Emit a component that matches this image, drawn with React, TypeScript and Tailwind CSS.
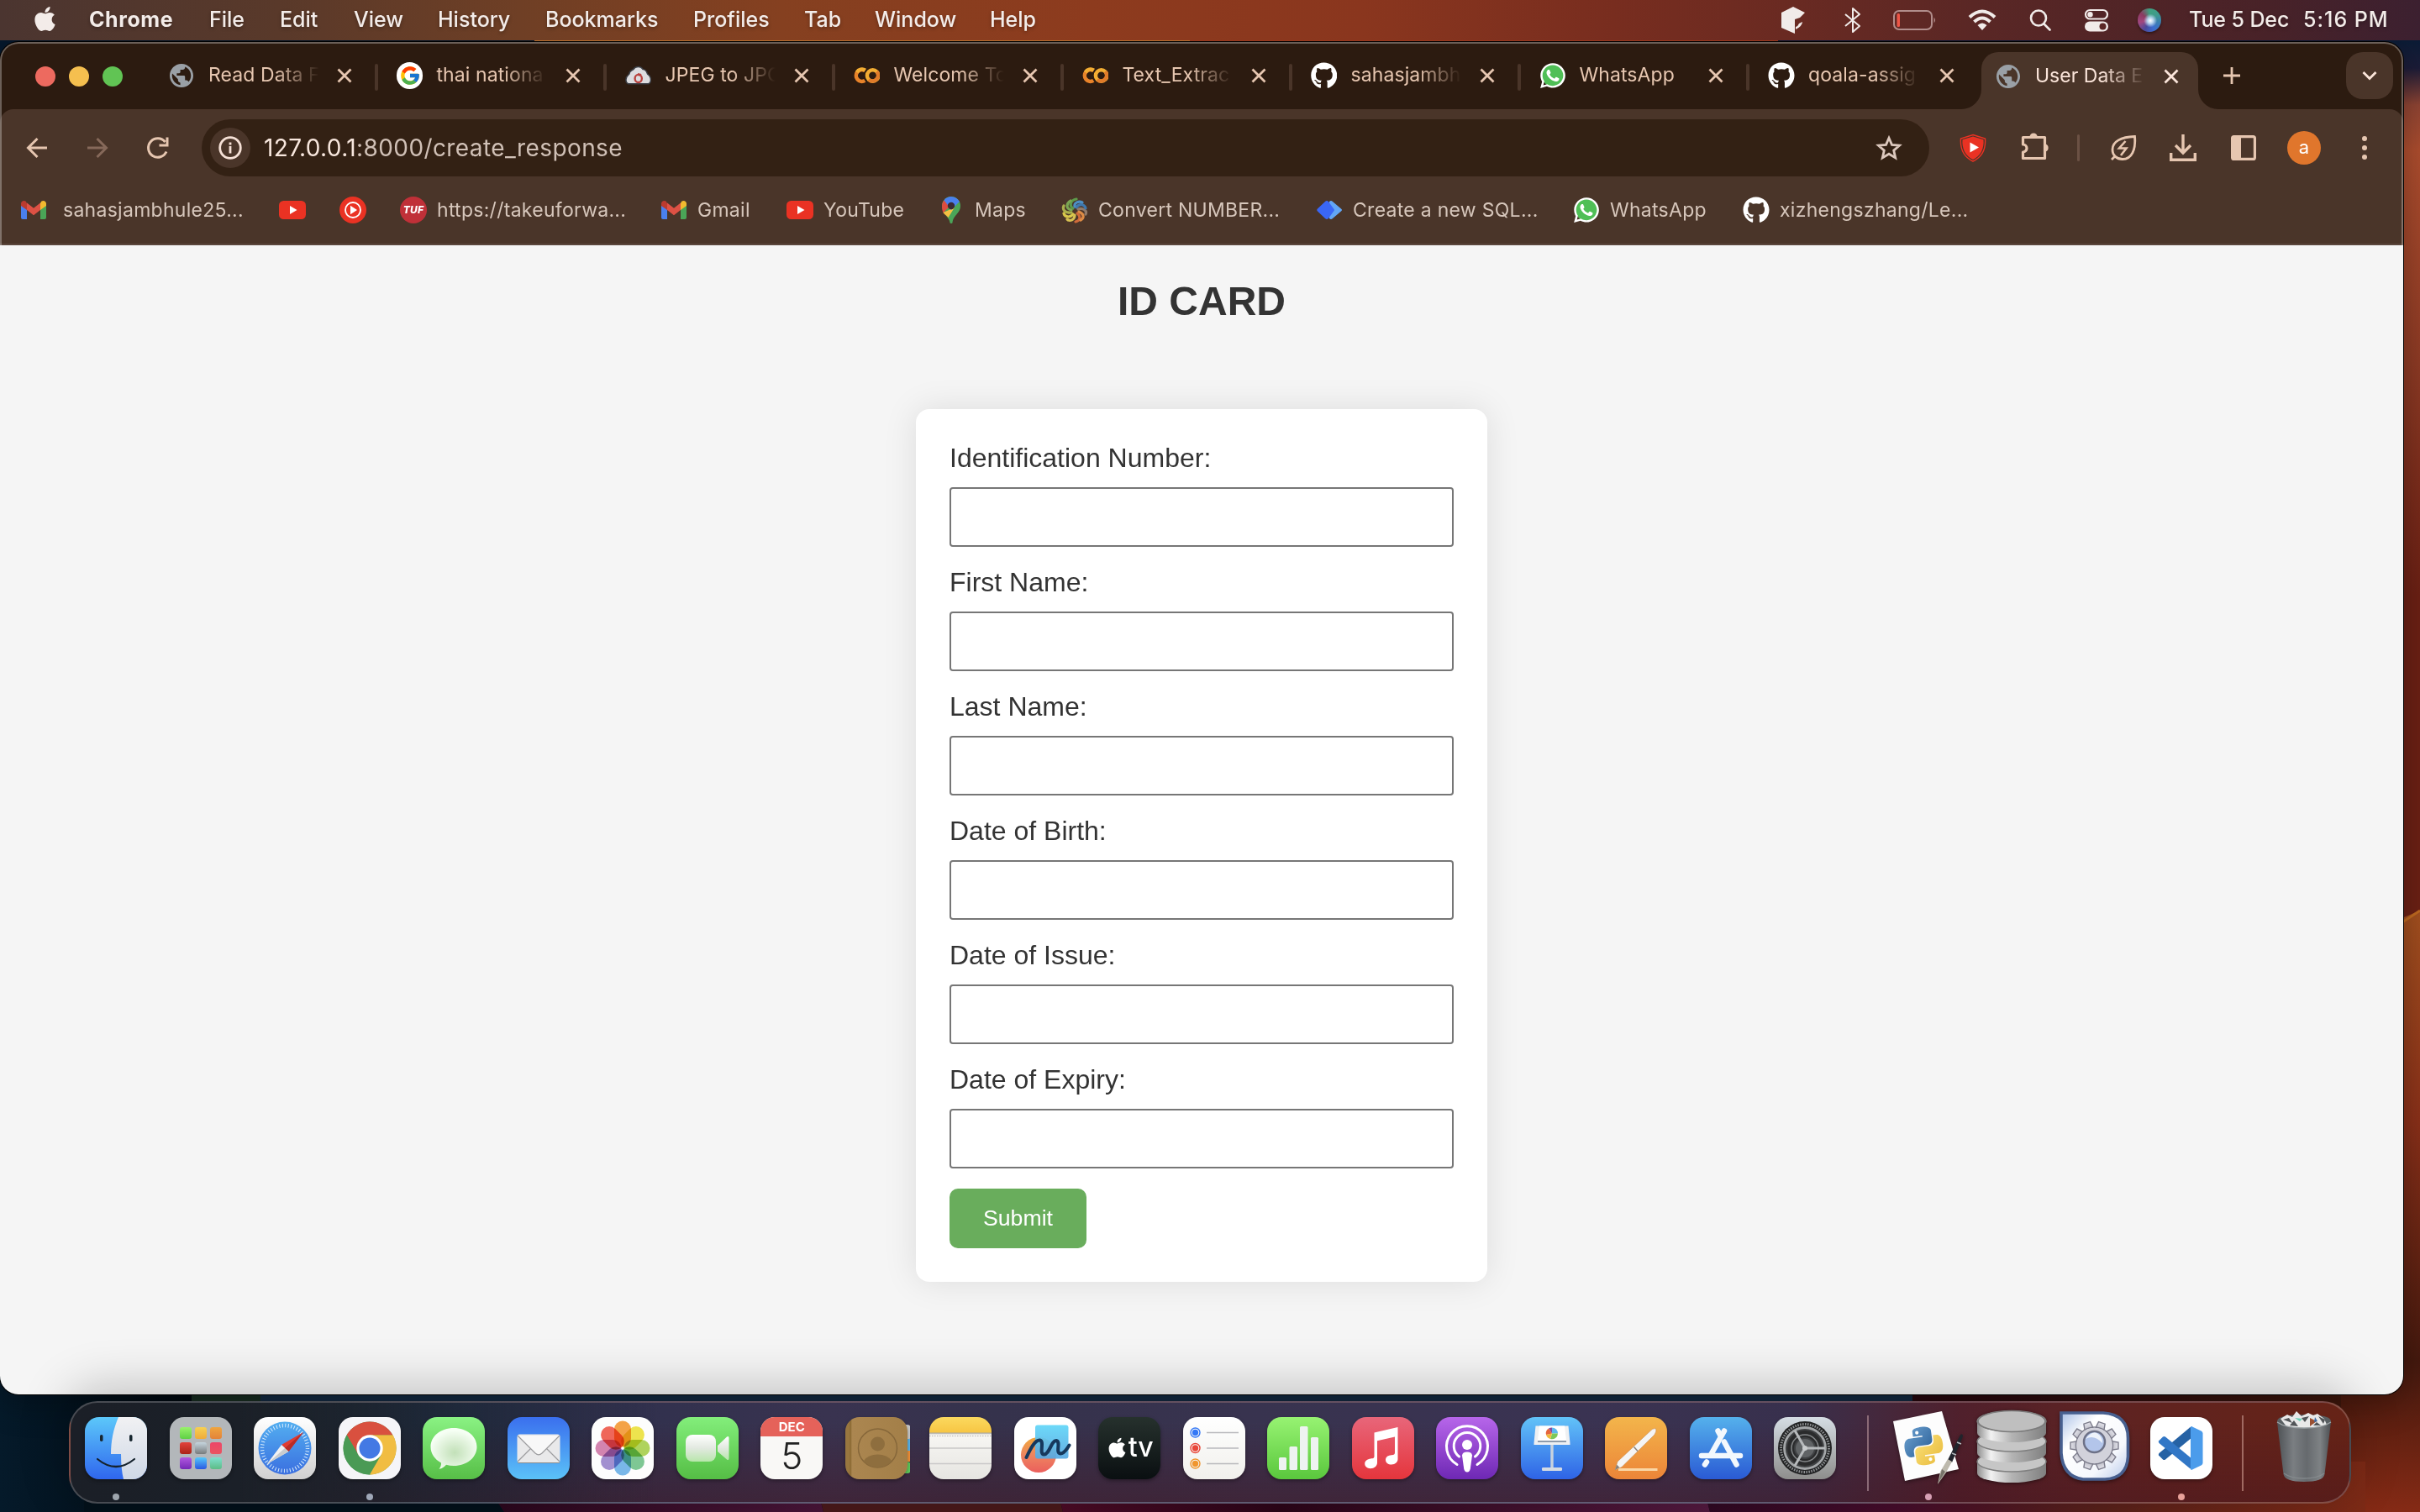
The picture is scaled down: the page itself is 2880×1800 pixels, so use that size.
import React from "react";
import { FaApple, FaGithub, FaWhatsapp } from "react-icons/fa6";
import { FcGoogle } from "react-icons/fc";

type Kids = { children?: React.ReactNode };

/* ---------- favicons ---------- */

const Globe = () => (
  <svg viewBox="0.6 0.6 22.8 22.8" className="size-8 shrink-0">
    <path d="M12 2C6.480 2 2 6.480 2 12s4.480 10 10 10 10-4.480 10-10S17.520 2 12 2zm-1 17.930c-3.950-.49-7-3.850-7-7.930 0-.62.08-1.210.21-1.790L9 15v1c0 1.100.9 2 2 2v1.930zm6.900-2.540c-.26-.81-1-1.390-1.900-1.390h-1v-3c0-.55-.45-1-1-1H8v-2h2c.55 0 1-.45 1-1V7h2c1.100 0 2-.9 2-2v-.41c2.930 1.190 5 4.060 5 7.410 0 2.080-.8 3.970-2.100 5.390z" fill="#9aa0a6" />
  </svg>
);

const GoogleIcon = () => (
  <div className="flex size-8 items-center justify-center rounded-full bg-white">
    <FcGoogle className="size-[26px]" />
  </div>
);

const CloudIcon = () => (
  <svg viewBox="0 0 32 32" className="size-8">
    <path d="M4 26a5 5 0 0 1-3-5c0-4 2-5 4-7 0-4 2.500-4 5-5.500 2-4 9-4.500 11.500 0C26 9 26 12 27 14c3 2 4 4 4 7a5 5 0 0 1-3 5z" fill="#dddde0" stroke="#3c3f46" strokeWidth="1.500" />
    <ellipse cx="16" cy="19.500" rx="4.200" ry="4.600" fill="none" stroke="#b8423e" strokeWidth="2.400" />
    <path d="M15 13l5 1-3 3z" fill="#b8423e" />
  </svg>
);

const Colab = () => (
  <svg viewBox="0 0 32 32" className="size-8" fill="none" strokeWidth="4.600">
    <path d="M13.500 10a7 7 0 1 0 0 12" stroke="#e8832a" />
    <path d="M14 9.500A7.200 7.200 0 0 0 3.800 12" stroke="#f3ad33" />
    <circle cx="23" cy="16" r="6.800" stroke="#f3ad33" />
    <path d="M27.800 11.200a6.800 6.800 0 0 1-9.600 9.600" stroke="#e07b2a" />
  </svg>
);

const Github = () => <FaGithub className="size-8 text-white" />;

const Whatsapp = () => (
  <div className="relative size-8">
    <div className="absolute top-[3px] left-[3px] size-[26px] rounded-full bg-[#4fbf56]" />
    <FaWhatsapp className="absolute -top-px -left-px size-[34px] text-white" />
  </div>
);

const GmailIcon = () => (
  <svg viewBox="0 0 32 32" className="size-8">
    <path d="M1 8v17a2 2 0 0 0 2 2h5V13z" fill="#4a80ee" />
    <path d="M31 8v17a2 2 0 0 1-2 2h-5V13z" fill="#4aa557" />
    <path d="M24 8v8l7-5V8.500C31 5.400 27.500 4 25.200 5.800z" fill="#f2b92f" />
    <path d="M8 8v8l-7-5V8.500C1 5.400 4.500 4 6.800 5.800z" fill="#bb3a2e" />
    <path d="M8 7.500l8 6.200 8-6.200V16l-8 6.200L8 16z" fill="#dd5144" />
  </svg>
);

const YouTubeIcon = () => (
  <svg viewBox="0 0 32 32" className="size-8">
    <rect x="0" y="5" width="32" height="22" rx="5.500" fill="#ea3223" />
    <path d="M13 11l8.500 5-8.500 5z" fill="#fff" />
  </svg>
);

const YTMusicIcon = () => (
  <svg viewBox="0 0 32 32" className="size-8">
    <circle cx="16" cy="16" r="16" fill="#ea3223" />
    <circle cx="16" cy="16" r="9" fill="none" stroke="#fff" strokeWidth="1.800" />
    <path d="M13 10.800l8 5.200-8 5.200z" fill="#fff" />
  </svg>
);

const TufIcon = () => (
  <div className="flex size-8 items-center justify-center rounded-full bg-[#c03038] font-['Inter'] text-[12px] font-extrabold text-white italic">TUF</div>
);

const MapsIcon = () => (
  <svg viewBox="0 0 32 32" className="size-8">
    <path d="M16 0a11 11 0 0 1 11 11c0 9-8.500 11-9.500 20 0 1.300-3 1.300-3 0C14 25 5 20 5 11A11 11 0 0 1 16 0z" fill="#4ba558" />
    <path d="M7.500 4.500l7 6.500-8 8.500C5.500 17 5 14.500 5 11c0-2.500 1-5 2.500-6.500z" fill="#dd4c3e" />
    <path d="M6.500 19l13.500-6-7.500 12c-2-2.500-5-4-6-6z" fill="#f5c042" />
    <path d="M7.500 4.200A11 11 0 0 1 25.800 6L16 16z" fill="#4a80ee" />
    <circle cx="16" cy="11" r="4.200" fill="#3b2a33" />
  </svg>
);

const SwirlIcon = () => (
  <svg viewBox="0 0 32 32" className="size-8" fill="none" strokeWidth="3.200" strokeLinecap="round">
    <path d="M14 14C9 11 11 4 18 3" stroke="#5e9a4a" />
    <path d="M12 16C5 14 6 8 11 5" stroke="#7ba653" />
    <path d="M12 19C4 20 1 15 3 11" stroke="#a9b04c" />
    <path d="M14 21C10 26 4 24 3 20" stroke="#d9c84b" />
    <path d="M16 22C16 28 10 30 7 27" stroke="#d6c052" />
    <path d="M19 20C24 24 22 29 17 30" stroke="#cf6a3a" />
    <path d="M21 18C28 21 27 26 23 28" stroke="#dd8b45" />
    <path d="M20 15C26 13 31 17 29 21" stroke="#8f7a6a" />
    <path d="M18 13C21 8 28 9 29 14" stroke="#3f78ae" />
    <path d="M16 12C15 7 21 5 25 7" stroke="#4c8fc4" />
  </svg>
);

const SqlIcon = () => (
  <svg viewBox="0 0 32 32" className="size-8">
    <path d="M16 6q2-2 4 0l10 8.500q2 1.500 0 3L20 26q-2 2-4 0z" fill="#62a6f5" />
    <path d="M11 6q2-2 4 0l6.500 9q1 1 0 2L15 26q-2 2-4 0L2 17.500q-1.500-1.500 0-3z" fill="#3a67f6" />
  </svg>
);

/* ---------- menu bar ---------- */

const menus: [string, string][] = [
  ["File", "w-[84px]"],
  ["Edit", "w-[88px]"],
  ["View", "w-[100px]"],
  ["History", "w-[128px]"],
  ["Bookmarks", "w-[176px]"],
  ["Profiles", "w-[132px]"],
  ["Tab", "w-[84px]"],
  ["Window", "w-[137px]"],
  ["Help", "w-[80px]"],
];

function MenuBar() {
  return (
    <header className="relative flex h-12 shrink-0 items-center bg-[linear-gradient(90deg,#4b3530_0px,#59392a_330px,#6f3f25_620px,#854020_930px,#8d3b1e_1300px,#8a361e_1620px,#782d1f_1920px,#5a2725_2350px,#482228_2700px,#3c2030_2880px)] pb-px pl-[37px] font-['Inter',sans-serif] text-[25px] font-medium text-[#f3ece9] [text-shadow:0_2px_4px_rgba(0,0,0,0.3)]">
      <div className="w-[69px]">
        <FaApple className="mt-[-3px] size-[33px]" />
      </div>
      <div className="w-[143px] font-bold tracking-[0.6px]">Chrome</div>
      {menus.map(([t, w]) => (
        <div key={t} className={w}>{t}</div>
      ))}
      <div className="ml-auto flex items-center">
        <svg viewBox="0 0 28 32" className="mr-[47px] h-8 w-7" fill="#f1ebe9">
          <path d="M14 0L28 7 22 13 16 15V32L0 25V7z" />
          <path d="M17 24q3-1 4-4l4-2q0 5-8 9z" />
        </svg>
        <svg viewBox="0 0 20 30" className="mr-[38px] h-[30px] w-5" fill="none" stroke="#f1ebe9" strokeWidth="2">
          <path d="M1 8l17 14-8 7V1l8 7L1 22" strokeLinejoin="round" />
        </svg>
        <svg viewBox="0 0 52 26" className="mr-[37px] h-[26px] w-[52px]">
          <rect x="1" y="2" width="45" height="22" rx="6" fill="none" stroke="#b18d8b" strokeWidth="2" />
          <rect x="4.500" y="5" width="3.500" height="16" rx="1.500" fill="#ee5546" />
          <path d="M48.500 9.500q3 3.500 0 7z" fill="#b18d8b" />
        </svg>
        <svg viewBox="0 0 34 26" className="mr-[39px] h-[26px] w-[34px]" fill="none" stroke="#f1ebe9" strokeWidth="4">
          <path d="M2 9.500Q17-4.500 32 9.500M7.500 15q9.500-9 19 0" />
          <path d="M11.500 19q5.500-5 11 0L17 25z" fill="#f1ebe9" stroke="none" />
        </svg>
        <svg viewBox="0 0 26 26" className="mr-[39px] size-[26px]" fill="none" stroke="#f1ebe9" strokeWidth="2.600" strokeLinecap="round">
          <circle cx="11" cy="10.500" r="9" />
          <path d="M17.500 17.500l7 7" />
        </svg>
        <svg viewBox="0 0 30 28" className="mr-[34px] h-7 w-[30px]">
          <rect x="2" y="2" width="26" height="10.500" rx="5.250" fill="none" stroke="#f1ebe9" strokeWidth="2.200" />
          <circle cx="7.500" cy="7.250" r="3.200" fill="#f1ebe9" />
          <rect x="1" y="15.500" width="28" height="12" rx="6" fill="#f1ebe9" />
          <circle cx="22.500" cy="21.500" r="4" fill="#5a2725" />
        </svg>
        <div className="mr-[33px] size-7 rounded-full bg-[radial-gradient(circle_at_54%_52%,#ffffff_0%,#b8d4ee_16%,transparent_38%),conic-gradient(#3fa080,#3f9c8c,#3a7fb0,#3a6bd0,#4a4a9c,#a2477f,#8b3a60,#3fa080)] shadow-[0_2px_3px_rgba(0,0,0,0.4)]" />
        <div className="w-[136px] tracking-[-0.1px]">Tue 5 Dec</div>
        <div className="w-[139px] tracking-[1px]">5:16 PM</div>
      </div>
    </header>
  );
}

/* ---------- tabs ---------- */

const Close = ({ tint }: { tint: string }) => (
  <svg viewBox="0 0 20 20" className={"size-5 shrink-0 " + tint} fill="none" stroke="currentColor" strokeWidth="2.800">
    <path d="M2.500 2.500l15 15m0-15l-15 15" />
  </svg>
);

const tabs = [
  { icon: <Globe />, label: "Read Data F", fade: true },
  { icon: <GoogleIcon />, label: "thai nationa", fade: true },
  { icon: <CloudIcon />, label: "JPEG to JPG", fade: true },
  { icon: <Colab />, label: "Welcome To", fade: true },
  { icon: <Colab />, label: "Text_Extrac", fade: true },
  { icon: <Github />, label: "sahasjambh", fade: true },
  { icon: <Whatsapp />, label: "WhatsApp", fade: false },
  { icon: <Github />, label: "qoala-assig", fade: true },
];

const fadeMask = "[mask-image:linear-gradient(to_right,#000_80px,transparent_132px)]";

function TabStrip() {
  return (
    <div className="flex h-20 shrink-0 items-end bg-[#2c1b10] font-['Inter',sans-serif] text-[23px] text-[#e6c6b0]">
      <div className="flex h-[78px] w-[178px] shrink-0 items-center gap-4 pl-[42px]">
        <div className="size-6 rounded-full bg-[#ed6a5f]" />
        <div className="size-6 rounded-full bg-[#f5bf4f]" />
        <div className="size-6 rounded-full bg-[#61c454]" />
      </div>
      {tabs.map((t, i) => (
        <div key={i} className="flex h-[78px] w-[272px] shrink-0 items-center pb-[3px] pl-[22px]">
          {t.icon}
          <div className={"ml-4 w-[146px] whitespace-nowrap tracking-[0.1px] " + (t.fade ? fadeMask : "")}>{t.label}</div>
          <div className="ml-[9px]"><Close tint="text-[#e6c6b0]" /></div>
          <div className={i < 7 ? "mt-1 ml-[26px] h-8 w-1 shrink-0 rounded bg-[#4a3529]" : ""} />
        </div>
      ))}
      <div className="relative ml-1 flex h-[68px] w-[258px] shrink-0 items-center rounded-t-[20px] bg-[#4a3529] pb-[11px] pl-4 text-[#fbe5da]">
        <svg viewBox="0 0 24 24" className="absolute bottom-0 -left-6 size-6" fill="#4a3529"><path d="M24 0v24H0A24 24 0 0 0 24 0z" /></svg>
        <svg viewBox="0 0 24 24" className="absolute -right-6 bottom-0 size-6" fill="#4a3529"><path d="M0 0v24h24A24 24 0 0 1 0 0z" /></svg>
        <Globe />
        <div className={"ml-4 w-[142px] whitespace-nowrap " + fadeMask}>User Data E</div>
        <div className="ml-[10px]"><Close tint="text-[#fbe5da]" /></div>
      </div>
      <div className="flex h-[68px] flex-1 items-start justify-between pr-3 pl-[30px]">
        <svg viewBox="0 0 20 20" className="mt-[18px] size-5" stroke="#e6c6b0" strokeWidth="2.800"><path d="M10 0v20M0 10h20" /></svg>
        <div className="flex size-14 items-center justify-center rounded-[20px] bg-[#4a3529]">
          <svg viewBox="0 0 18 12" className="h-3 w-[18px]" fill="none" stroke="#fbe5da" strokeWidth="2.800"><path d="M1.500 2L9 9.500 16.500 2" /></svg>
        </div>
      </div>
    </div>
  );
}

/* ---------- toolbar ---------- */

function Toolbar() {
  return (
    <div className="flex h-[92px] shrink-0 items-center pl-[31px] text-[#e6c6b0]">
      <svg viewBox="0 0 26 26" className="mr-[46px] size-[26px]" fill="none" stroke="currentColor" strokeWidth="3"><path d="M25 13H3M13.500 2L2.500 13l11 11" /></svg>
      <svg viewBox="0 0 26 26" className="mr-[45px] size-[26px]" fill="none" stroke="#86695a" strokeWidth="3"><path d="M1 13h22M12.500 2l11 11-11 11" /></svg>
      <svg viewBox="0 0 28 28" className="mr-[38px] size-7" fill="none" stroke="currentColor" strokeWidth="3"><path d="M24 18.500A11.200 11.200 0 1 1 22.500 7M25 1.500v9.500h-9.500" /></svg>
      <div className="flex h-[68px] w-[2056px] items-center rounded-full bg-[#332114] pr-8 pl-[10px]">
        <div className="flex size-12 items-center justify-center rounded-full bg-[#4a3529]">
          <svg viewBox="0 0 28 28" className="size-7" fill="none" stroke="#f5e0d6" strokeWidth="2.800"><circle cx="14" cy="14" r="12.300" /><path d="M14 12v8.500M14 7.500v3" /></svg>
        </div>
        <div className="ml-4 flex-1 font-['Inter',sans-serif] text-[28px] tracking-[0.4px] text-[#d0c0b6]">
          <span className="text-[#f8e7de]">127.0.0.1</span>:8000/create_response
        </div>
        <svg viewBox="0 0 32 32" className="size-8" fill="none" stroke="#dcc8bd" strokeWidth="2.800"><path d="M16 4.200l3.500 8.200 9 .8-6.800 5.900 2 8.800L16 23.200l-7.700 4.700 2-8.800-6.800-5.900 9-.8z" /></svg>
      </div>
      <svg viewBox="0 0 32 34" className="ml-[36px] h-[34px] w-8">
        <path d="M16 1.500L30.500 6c1 13-4 22-14.500 27C5.500 28 .5 19 1.500 6z" fill="none" stroke="#ea3223" strokeWidth="1.400" />
        <path d="M16 3.500L28.500 7.200C29.300 18.500 25 26.500 16 31 7 26.500 2.700 18.500 3.500 7.200z" fill="#ea3223" />
        <path d="M12.500 10.500l10.500 6-10.500 6z" fill="#fff" />
      </svg>
      <svg viewBox="0 0 36 36" className="mb-1 ml-10 size-9" fill="none" stroke="currentColor" strokeWidth="3.200" strokeLinejoin="round">
        <path d="M3.500 7.500h26v25h-26V25a4.500 4.500 0 0 0 0-9z" />
        <path d="M11.500 7a4.600 4.600 0 0 1 9.200 0zM30 15.500a4.600 4.600 0 0 1 0 9z" fill="currentColor" stroke="none" />
      </svg>
      <div className="ml-[32px] h-8 w-[3px] rounded bg-[#6b5144]" />
      <svg viewBox="0 0 32 32" className="ml-[36px] size-8" fill="none" stroke="currentColor" strokeWidth="2.800">
        <path d="M29.500 2.500C31 18 26 29.500 15 29.500c-7 0-12-4.500-12-11.500C3 8.500 13 3 29.500 2.500zM2 30l5-5" />
        <path d="M18.500 8l-7.500 8.500h8.500L13 25" strokeWidth="2.600" />
      </svg>
      <svg viewBox="0 0 34 34" className="ml-[38px] size-[34px]" fill="none" stroke="currentColor" strokeWidth="3.400">
        <path d="M17 1v21M8 14l9 9 9-9M2.700 23v8.300h28.600V23" />
      </svg>
      <svg viewBox="0 0 30 30" className="ml-10 size-[30px]">
        <rect x="1.600" y="1.600" width="26.800" height="26.800" rx="2" fill="none" stroke="currentColor" strokeWidth="3.200" />
        <path d="M2 2h10v26H2z" fill="currentColor" />
      </svg>
      <div className="ml-[37px] flex size-10 items-center justify-center rounded-full bg-[#e0762c] pb-0.5 font-['Inter',sans-serif] text-[22px] text-white">a</div>
      <svg viewBox="0 0 8 30" className="ml-12 h-[30px] w-2" fill="currentColor"><circle cx="4" cy="4" r="3" /><circle cx="4" cy="15" r="3" /><circle cx="4" cy="26" r="3" /></svg>
    </div>
  );
}

const bookmarks: { icon: React.ReactNode; label?: string; w: string; gap?: string }[] = [
  { icon: <GmailIcon />, label: "sahasjambhule25...", w: "w-[308px]", gap: "ml-[19px]" },
  { icon: <YouTubeIcon />, w: "w-[72px]" },
  { icon: <YTMusicIcon />, w: "w-[72px]" },
  { icon: <TufIcon />, label: "https://takeuforwa...", w: "w-[310px]" },
  { icon: <GmailIcon />, label: "Gmail", w: "w-[150px]" },
  { icon: <YouTubeIcon />, label: "YouTube", w: "w-[180px]" },
  { icon: <MapsIcon />, label: "Maps", w: "w-[147px]" },
  { icon: <SwirlIcon />, label: "Convert NUMBER...", w: "w-[303px]" },
  { icon: <SqlIcon />, label: "Create a new SQL...", w: "w-[306px]" },
  { icon: <Whatsapp />, label: "WhatsApp", w: "w-[202px]" },
  { icon: <Github />, label: "xizhengszhang/Le...", w: "w-[300px]" },
];

function BookmarkBar() {
  return (
    <div className="flex flex-1 items-center pb-3 pl-6 font-['Inter',sans-serif] text-[23px] tracking-[0.28px] text-[#d6c6bb]">
      {bookmarks.map((b, i) => (
        <div key={i} className={"flex shrink-0 items-center whitespace-nowrap " + b.w}>
          {b.icon}
          {b.label && <span className={b.gap ?? "ml-3"}>{b.label}</span>}
        </div>
      ))}
    </div>
  );
}

/* ---------- page ---------- */

const fields = ["Identification Number:", "First Name:", "Last Name:", "Date of Birth:", "Date of Issue:", "Date of Expiry:"];

function Page() {
  return (
    <main className="flex flex-1 flex-col items-center bg-[#f5f5f5] pt-[39px] font-['Liberation_Sans',Arial,sans-serif] text-[#333]">
      <h1 className="h-[55px] text-[48px] leading-[55px] font-bold">ID CARD</h1>
      <form className="mt-[101px] w-[680px] rounded-2xl bg-white p-10 shadow-[0_0_40px_rgba(0,0,0,0.1)]" onSubmit={(e) => e.preventDefault()}>
        {fields.map((f) => (
          <label key={f} className="mb-6 block h-[124px] text-[32px] leading-[37px]">
            {f}
            <input className="mt-4 block h-[71px] w-full rounded-[4px] border-2 border-[#767676] bg-white px-4 outline-none" />
          </label>
        ))}
        <button className="block h-[71px] w-[163px] rounded-[10px] bg-[#69ad5c] pb-0.5 text-[26.67px] text-white">Submit</button>
      </form>
    </main>
  );
}

/* ---------- dock icons ---------- */

const Tile = ({ bg, children }: Kids & { bg: string }) => (
  <div className={"relative flex size-[74px] shrink-0 items-center justify-center overflow-hidden rounded-[17px] shadow-[0_2px_4px_rgba(0,0,0,0.35)] " + bg}>{children}</div>
);

const Art = ({ children }: Kids) => <svg viewBox="0 0 74 74" className="size-[74px]">{children}</svg>;

const Finder = () => (
  <Tile bg="bg-[linear-gradient(#5cc8fa,#2f66ee)]">
    <Art>
      <defs><linearGradient id="fi" x1="0" y1="0" x2="0" y2="1"><stop stopColor="#f1f1f3" /><stop offset="1" stopColor="#cfd8e6" /></linearGradient></defs>
      <path d="M40 0h34v74H46c-2-8-3-18-3-30H31c0-16 3-30 9-44z" fill="url(#fi)" />
      <rect x="18" y="21" width="3.500" height="8" rx="1.700" fill="#17262f" />
      <rect x="53" y="21" width="3.500" height="8" rx="1.700" fill="#17262f" />
      <path d="M15 50q22 18 44 0" fill="none" stroke="#15222c" strokeWidth="2.200" strokeLinecap="round" />
    </Art>
  </Tile>
);

const padColors: [string, string][] = [
  ["#98f26b", "#5fd045"], ["#f7d052", "#eeab3b"], ["#efa53f", "#e3833a"],
  ["#e2433c", "#ab2316"], ["#c6d5de", "#777b7c"], ["#ed4669", "#ea5560"],
  ["#b158e0", "#7529b6"], ["#54c8fb", "#2b58e2"], ["#7fe0cf", "#5cbc86"],
];
const Launchpad = () => (
  <Tile bg="bg-[#b3b7ba]">
    <Art>
      {padColors.map(([a, b], i) => (
        <g key={i}>
          <linearGradient id={"lp" + i} x1="0" y1="0" x2="0" y2="1"><stop stopColor={a} /><stop offset="1" stopColor={b} /></linearGradient>
          <rect x={12 + (i % 3) * 18} y={12 + Math.floor(i / 3) * 18} width="14" height="14" rx="3" fill={"url(#lp" + i + ")"} />
        </g>
      ))}
    </Art>
  </Tile>
);

const Safari = () => (
  <Tile bg="bg-[linear-gradient(#ffffff,#d0d0d0)]">
    <Art>
      <defs><linearGradient id="sf" x1="0" y1="0" x2="0" y2="1"><stop stopColor="#53aef0" /><stop offset="1" stopColor="#3a6fe0" /></linearGradient></defs>
      <circle cx="37" cy="37" r="31.500" fill="url(#sf)" />
      <circle cx="37" cy="37" r="27" fill="none" stroke="#d8ecfc" strokeWidth="4.500" strokeDasharray="1 2.530" />
      <path d="M59 18L41.500 41 33 33z" fill="#e03c32" />
      <path d="M15.500 56L33 33l8.500 8z" fill="#f2f2f2" />
      <path d="M59 18L41.500 41 37 37z" fill="#b92c26" />
      <path d="M15.500 56l21.500-19 4.500 4z" fill="#c9cccf" />
    </Art>
  </Tile>
);

const ChromeArt = () => (
  <Tile bg="bg-[#f5f5f8]">
    <Art>
      <circle cx="37" cy="37" r="31.500" fill="#4a9a55" />
      <path d="M37 37L37 68.500A31.500 31.500 0 0 0 64.500 21.300L37 21.300z" fill="#f1bd42" />
      <path d="M9.700 21.300A31.500 31.500 0 0 1 64.300 21.300L37 21.300 23.500 45z" fill="#d9503f" />
      <path d="M37 68.500L50.600 45 37 37 23.400 45 9.700 21.300a31.500 31.500 0 0 0 27.300 47.200z" fill="#4a9a55" />
      <circle cx="37" cy="37" r="15.700" fill="#fff" />
      <circle cx="37" cy="37" r="12.500" fill="#4379e4" />
    </Art>
  </Tile>
);

const Messages = () => (
  <Tile bg="bg-[linear-gradient(#8af283,#57bf47)]">
    <Art>
      <defs><radialGradient id="ms" cx=".52" cy=".6" r=".6"><stop stopColor="#c2e0b8" /><stop offset=".9" stopColor="#f6fff4" /></radialGradient></defs>
      <path d="M37 13c15.500 0 27.500 9.800 27.500 22.500S52.500 58 37 58c-3 0-6-.4-9-1.200-2 2.700-5 4.500-8.500 5 1.800-2 2.600-4.600 2.500-7.300C14.500 50.500 9.500 43.500 9.500 35.500 9.500 22.800 21.500 13 37 13z" fill="url(#ms)" />
    </Art>
  </Tile>
);

const Mail = () => (
  <Tile bg="bg-[linear-gradient(#3a6fee,#5bc2f8)]">
    <Art>
      <rect x="11.500" y="20.500" width="51" height="34" rx="3" fill="#e9e9ea" />
      <path d="M12 53l16-16M62 53L46 37" stroke="#9c9c9e" strokeWidth="1.200" />
      <path d="M12 22l21 21q4 3.600 8 0l21-21" fill="#f8f8f8" stroke="#9c9c9e" strokeWidth="1.200" />
      <path d="M12 54.500h50" stroke="#8a8a8a" strokeWidth="1" />
    </Art>
  </Tile>
);

const petals = ["#f39a38", "#ece13f", "#a8d04f", "#73c28b", "#6db1e6", "#9a86cc", "#cf7aa8", "#ee5a4c"];
const Photos = () => (
  <Tile bg="bg-[#fdfdfd]">
    <Art>
      <g className="isolate">
        {petals.map((c, i) => (
          <rect key={c} x="27" y="4.500" width="20" height="31" rx="10" fill={c} opacity=".92" transform={"rotate(" + i * 45 + " 37 37)"} className="mix-blend-multiply" />
        ))}
      </g>
      <circle cx="37" cy="37" r="1.500" fill="#fff" />
    </Art>
  </Tile>
);

const FaceTime = () => (
  <Tile bg="bg-[linear-gradient(#83ee7b,#55be45)]">
    <Art>
      <defs><linearGradient id="ft" x1="0" y1="0" x2="0" y2="1"><stop stopColor="#fff" /><stop offset=".5" stopColor="#e2e9e0" /><stop offset="1" stopColor="#b8e6ab" /></linearGradient></defs>
      <rect x="11" y="21" width="36" height="32" rx="8" fill="url(#ft)" />
      <path d="M49 34l11-10.500q2.500-1.500 2.500 1.500v24q0 3-2.500 1.500L49 41z" fill="url(#ft)" />
    </Art>
  </Tile>
);

const Calendar = () => (
  <Tile bg="bg-[#f9f8f6]">
    <div className="flex size-full flex-col items-center font-['Inter',sans-serif]">
      <div className="flex h-[23px] w-full items-center justify-center bg-[#e5625a] pt-0.5 text-[15px] font-bold text-white">DEC</div>
      <div className="text-[44px] leading-[46px] font-light text-[#222]">5</div>
    </div>
  </Tile>
);

const Contacts = () => (
  <div className="relative">
    <svg viewBox="0 0 6 58" className="absolute top-[9px] -right-[3px] h-[58px] w-3" preserveAspectRatio="none">
      <rect width="6" height="18" rx="2" fill="#c9c9c9" /><rect y="17" width="6" height="14" fill="#5bb5ea" /><rect y="31" width="6" height="13" fill="#f0923a" /><rect y="44" width="6" height="14" rx="2" fill="#5fca5b" />
    </svg>
    <Tile bg="bg-[linear-gradient(90deg,#98763f_0px,#98763f_5px,#87662f_6px,#ab8650_8px,#a37f48_74px)]">
      <Art>
        <circle cx="38.500" cy="37" r="23" fill="none" stroke="#86673a" strokeWidth="1.500" />
        <circle cx="38.500" cy="32" r="8.500" fill="#8e6e3e" />
        <path d="M22 52q5-7.500 16.500-7.500T55 52q-6 8-16.500 8T22 52z" fill="#8e6e3e" />
      </Art>
    </Tile>
  </div>
);

const Notes = () => (
  <Tile bg="bg-[linear-gradient(#fbd95f_0px,#f7c644_18px,#a9a69d_19px,#f7f6f3_21px,#e6e5e1_74px)]">
    <Art>
      <path d="M0 22.500h74" stroke="#b5b2ab" strokeWidth="1.200" strokeDasharray="1.500 1.500" />
      <path d="M0 37h74M0 55.500h74" stroke="#c9c8c8" strokeWidth="1.400" />
    </Art>
  </Tile>
);

const Freeform = () => (
  <Tile bg="bg-white">
    <Art>
      <defs>
        <linearGradient id="ff" x1="0" y1="0" x2="0" y2="1"><stop stopColor="#f0a83c" /><stop offset=".5" stopColor="#ee8560" /><stop offset="1" stopColor="#eb5f5c" /></linearGradient>
        <linearGradient id="fg" x1="0" y1="0" x2="0" y2="1"><stop stopColor="#62d6f8" /><stop offset="1" stopColor="#58a8e2" /></linearGradient>
      </defs>
      <circle cx="29" cy="45" r="21" fill="url(#ff)" />
      <rect x="25" y="9.500" width="39.500" height="40" rx="3" fill="url(#fg)" opacity=".93" />
      <path d="M14.500 48C20 36 25 27 30.500 27.500c6 1-1.500 17 5 17C42 44.500 44 28 50 28c6 1-1.500 15 5 15.500 4 0 7-4 10.500-10" fill="none" stroke="#16385c" strokeWidth="4" strokeLinecap="round" />
    </Art>
  </Tile>
);

const AppleTV = () => (
  <Tile bg="bg-[linear-gradient(#26312d,#0a0f11)]">
    <div className="flex items-center font-['Inter',sans-serif] text-[32px] leading-none font-medium text-white">
      <FaApple className="size-[27px]" />
      <span className="-mt-0.5">tv</span>
    </div>
  </Tile>
);

const Reminders = () => (
  <Tile bg="bg-[linear-gradient(#ffffff,#f1f0ec)]">
    <Art>
      {["#3478f6", "#e8473a", "#f0962e"].map((c, i) => (
        <g key={c}>
          <circle cx="14.500" cy={18.5 + i * 18.5} r="5.500" fill="none" stroke={c} strokeWidth="1.400" />
          <circle cx="14.500" cy={18.5 + i * 18.5} r="3.700" fill={c} />
          <path d={"M28 " + (18.5 + i * 18.5) + "h38"} stroke="#b9b9bc" strokeWidth="1.400" />
        </g>
      ))}
    </Art>
  </Tile>
);

const Numbers = () => (
  <Tile bg="bg-[linear-gradient(#97f372,#5ac73d)]">
    <Art>
      <g fill="#eef3f1">
        <rect x="14" y="48" width="9" height="15" rx="1.500" /><rect x="26.500" y="35" width="9.500" height="28" rx="1.500" />
        <rect x="39" y="11" width="9.500" height="52" rx="1.500" /><rect x="52" y="24" width="9" height="39" rx="1.500" />
      </g>
    </Art>
  </Tile>
);

const Music = () => (
  <Tile bg="bg-[linear-gradient(#e8667a,#e5353c)]">
    <Art>
      <path d="M26.500 18.500L54.500 12v38c0 3.500-3 6.500-7.500 6.500-4 0-7-2-7-5.500s3-5.500 7-5.700c3-.3 4-.8 4-3V23.500l-21 4.700v26c0 4-3.500 7-8 7-4 0-6.800-2.400-6.800-5.600s3-5.600 7-6c3.500-.3 4.300-1 4.300-3z" fill="#fff" />
    </Art>
  </Tile>
);

const Podcasts = () => (
  <Tile bg="bg-[linear-gradient(#b766ea,#6e28b4)]">
    <Art>
      <g fill="none" stroke="#fff" strokeLinecap="round">
        <path d="M25 56.500a24.500 24.500 0 1 1 24 0" strokeWidth="3" />
        <path d="M27.500 47a15.800 15.800 0 1 1 19 0" strokeWidth="3" />
      </g>
      <circle cx="37" cy="33" r="6" fill="#fff" />
      <path d="M31 45.500q.5-4 6-4t6 4l-2.200 16q-.8 4-3.800 4t-3.800-4z" fill="#fff" />
    </Art>
  </Tile>
);

const Keynote = () => (
  <Tile bg="bg-[linear-gradient(#62c3f8,#2e63e6)]">
    <Art>
      <path d="M17.500 10.500h39l2 20.500v2h-43v-2z" fill="#eef0f2" />
      <path d="M22 10.500h30l2 17.500H20z" fill="#fff" />
      <path d="M20 28h34v2H20z" fill="#8f9cab" />
      <path d="M37 19.500V12.500a7 7 0 0 1 7 7z" fill="#5bb8ef" /><path d="M37 19.500h7a7 7 0 0 1-9 6.500z" fill="#7cc85a" /><path d="M37 19.500L35 26a7 7 0 0 1-5-5z" fill="#f0b93c" /><path d="M37 19.500l-7 1.500a7 7 0 0 1 3-7.500z" fill="#e6663c" /><path d="M37 19.500l-4-6a7 7 0 0 1 4-1z" fill="#8a4c9c" />
      <path d="M35.300 33h3.400v28h-3.400z" fill="#c8d2de" />
      <rect x="25" y="60" width="24" height="4" rx="1.200" fill="#d5dbe3" />
    </Art>
  </Tile>
);

const Pages = () => (
  <Tile bg="bg-[linear-gradient(#f3b54b,#ec8538)]">
    <Art>
      <path d="M16 62.500h46.500" stroke="#fad7a6" strokeWidth="3" />
      <path d="M12 63l3-10L53 17.500q3.500-4.500 7.500-4 1.500 3-1.500 7.500L20 59.500z" fill="#f5f5f5" stroke="#c98b4b" strokeWidth=".6" />
      <path d="M34.500 35.500l4.500 5" stroke="#8a8178" strokeWidth="1.500" />
      <path d="M12 63l2-6.500 3.500 3.500z" fill="#8a8178" />
    </Art>
  </Tile>
);

const AppStore = () => (
  <Tile bg="bg-[linear-gradient(#55b1ec,#2a5ad4)]">
    <Art>
      <g stroke="#f3f8fd" strokeLinecap="round" strokeWidth="6.500">
        <path d="M14 46h46" /><path d="M41 16.500L25.500 44" /><path d="M33.500 16.500l3 5.500M41 29.500l14.500 27" /><path d="M20 53.500l-2 3" />
      </g>
    </Art>
  </Tile>
);

const Settings = () => (
  <Tile bg="bg-[linear-gradient(#d5dde4,#8e8e8c)]">
    <Art>
      <circle cx="37" cy="37" r="32" fill="#222324" />
      <circle cx="37" cy="37" r="28.500" fill="none" stroke="#8f9294" strokeWidth="3" strokeDasharray="1.500 1.480" />
      <circle cx="37" cy="37" r="24.500" fill="#3f4143" stroke="#a3a6a8" strokeWidth="2.800" />
      <circle cx="37" cy="37" r="17" fill="none" stroke="#2a2b2c" strokeWidth="8" />
      <circle cx="37" cy="37" r="16" fill="none" stroke="#85888a" strokeWidth="1.500" />
      <circle cx="37" cy="37" r="11" fill="#606365" />
      <path d="M37 37h24M37 37L25 16M37 37L25 58" stroke="#b6b9bb" strokeWidth="3" />
      <circle cx="37" cy="37" r="3" fill="#c9cccd" />
    </Art>
  </Tile>
);

const pySnake = "M14.25.18l.9.2.73.26.59.3.45.32.34.34.25.34.16.33.1.3.04.26.02.2-.01.13V8.500l-.05.63-.13.55-.21.46-.26.38-.3.31-.33.25-.35.19-.35.14-.33.1-.3.07-.26.04-.21.02H8.770l-.69.05-.59.14-.5.22-.41.27-.33.32-.27.35-.2.36-.15.37-.1.35-.07.32-.04.27-.02.21v3.060H3.170l-.21-.03-.28-.07-.32-.12-.35-.18-.36-.26-.36-.36-.35-.46-.32-.59-.28-.73-.21-.88-.14-1.050-.05-1.230.06-1.220.16-1.040.24-.87.32-.71.36-.57.4-.44.42-.33.42-.24.4-.16.36-.1.32-.05.24-.01h.16l.06.01h8.160v-.83H6.180l-.01-2.750-.02-.37.05-.34.11-.31.17-.28.25-.26.31-.23.38-.2.44-.18.51-.15.58-.12.64-.1.71-.06.77-.04.84-.02 1.270.05z";

const PythonDoc = () => (
  <svg viewBox="0 0 86 88" className="-mt-0.5 h-[88px] w-[86px] drop-shadow-[0_2px_2px_rgba(0,0,0,0.4)]">
    <defs>
      <linearGradient id="py1" x1="0" y1="0" x2="1" y2="1"><stop stopColor="#6fa3d2" /><stop offset="1" stopColor="#285e96" /></linearGradient>
      <linearGradient id="py2" x1="0" y1="0" x2="1" y2="1"><stop stopColor="#e8b93a" /><stop offset="1" stopColor="#fbe27a" /></linearGradient>
    </defs>
    <path d="M1 13L59 1 79 70 15 84z" fill="#fdfdfd" />
    <g transform="rotate(-8 38 42) translate(14.500 19.500) scale(1.900)">
      <path d={pySnake} fill="url(#py1)" /><circle cx="8.900" cy="3.200" r="1.100" fill="#fff" />
      <g transform="rotate(180 12 12)"><path d={pySnake} fill="url(#py2)" /><circle cx="8.900" cy="3.200" r="1.100" fill="#fff" /></g>
    </g>
    <path d="M81 29q3-2 3 2L71 62l-5-3z" fill="#20242c" />
    <path d="M66 58l5 3-7 13-10 14 3-15z" fill="#bdb9ad" />
    <path d="M59 70l4 3-8 13z" fill="#77736a" />
    <path d="M77 38l5 2M71 51l5 2" stroke="#b5b8bd" strokeWidth="1.600" />
  </svg>
);

const Database = () => (
  <svg viewBox="0 0 84 90" className="-mt-[2px] h-[90px] w-[84px] drop-shadow-[0_1px_2px_rgba(0,0,0,0.5)]">
    <defs>
      <linearGradient id="db"><stop stopColor="#8f8f8f" /><stop offset=".2" stopColor="#f2f2f2" /><stop offset=".5" stopColor="#b4b4b4" /><stop offset="1" stopColor="#7f7f7f" /></linearGradient>
    </defs>
    {[58, 34, 10].map((y) => (
      <g key={y}>
        <path d={"M1 " + (y + 6) + "v12a41 11 0 0 0 82 0v-12z"} fill="url(#db)" />
        <ellipse cx="42" cy={y + 4} rx="41" ry="12" fill="#c6c6c6" stroke="#808080" strokeWidth="1.500" />
      </g>
    ))}
    <ellipse cx="42" cy="14" rx="40" ry="12.500" fill="#bfbfbf" stroke="#7b7b7b" strokeWidth="1.600" />
  </svg>
);

const teeth = [0, 36, 72, 108, 144, 180, 216, 252, 288, 324];
const GearApp = () => (
  <svg viewBox="0 0 84 84" className="-mt-[3px] size-[84px] drop-shadow-[0_2px_2px_rgba(0,0,0,0.4)]">
    <defs>
      <linearGradient id="ga" x1="0" y1="0" x2="1" y2="1"><stop stopColor="#a9bfe6" /><stop offset=".3" stopColor="#fff" /><stop offset=".7" stopColor="#f6f8fd" /><stop offset="1" stopColor="#b5c7e8" /></linearGradient>
      <linearGradient id="gb" x1="0" y1="0" x2="0" y2="1"><stop stopColor="#e2e2ea" /><stop offset="1" stopColor="#b4b4be" /></linearGradient>
    </defs>
    <path d="M2 2h50Q81.500 4 81.500 32v22Q80 80 54 81H28Q4 78 2 50z" fill="url(#ga)" stroke="#475f8f" strokeWidth="3.600" />
    <g fill="url(#gb)" stroke="#7d7d8c" strokeWidth="1.400">
      {teeth.map((a) => (
        <path key={a} d="M36 22l1.500-9.500h8l1.500 9.500z" transform={"rotate(" + (a + 18) + " 41.500 41)"} />
      ))}
      <circle cx="41.500" cy="41" r="22" />
    </g>
    <circle cx="41.500" cy="41" r="21.200" fill="#d2d2db" />
    <circle cx="41.500" cy="36.500" r="12.500" fill="#b3c5ea" stroke="#6d7187" strokeWidth="2.500" />
    <path d="M31 33q10-6 20 5a12 12 0 0 0-1.500-7q-8-12-18.500 2z" fill="#eef3fb" />
  </svg>
);

const VSCode = () => (
  <Tile bg="bg-white">
    <Art>
      <path d="M10 45.500l5 5q1.500 1 3 0L50 24V11.500q-1.500 0-3 1L10.500 43q-1 1.200-.5 2.500z" fill="#2662a4" />
      <path d="M10 28.500l5-5q1.500-1 3 0L50 50v12q-1.500 0-3-1L10.500 31q-1-1.200-.5-2.500z" fill="#3277c6" />
      <path d="M49 11q-1 0-1 2v48q0 2 1 2l12-5.800q1.500-1 1.500-2.700V19.500q0-1.700-1.500-2.700z" fill="#4b9ceb" />
    </Art>
  </Tile>
);

const Trash = () => (
  <svg viewBox="0 0 66 86" className="-mt-[1px] h-[86px] w-[66px]">
    <defs>
      <linearGradient id="tr"><stop stopColor="#4d5357" /><stop offset=".3" stopColor="#7b8185" /><stop offset=".55" stopColor="#666c70" /><stop offset=".8" stopColor="#7f8588" /><stop offset="1" stopColor="#4a4f53" /></linearGradient>
    </defs>
    <path d="M1 12q0-8 32-8t32 8q0 6-5 6L6 18q-5-1-5-6z" fill="#595f62" />
    <path d="M5 9l8-5 6 3 5-7 6 6 8-4 6 3 5-2 8 6 3 7-8 3-20 2-20-3z" fill="#e9e9e9" />
    <path d="M8 10l7-2 4 6zM16 17l5-6 5 7zM30 8l4 5 5-7zM50 6l6 9 2-5zM44 17l4-4 5 4z" fill="#525558" />
    <path d="M22 8l9 1-3 3z" fill="#69cfb7" /><path d="M40 8l8 4-8 6z" fill="#9a4f32" /><path d="M46 7l3 5-4 1z" fill="#3b6aa6" />
    <path d="M1 13q10 7 32 7t32-7l-7.500 62Q56 84 33 84T8.500 75z" fill="url(#tr)" opacity=".97" />
    <path d="M1 13q10 7 32 7t32-7" fill="none" stroke="#9da3a6" strokeWidth="1.400" />
    <path d="M9 74q8 6 24 6t24-6" fill="none" stroke="#8d9396" strokeWidth="1.500" opacity=".7" />
  </svg>
);

/* ---------- dock ---------- */

const Slot = ({ w, dot, children }: Kids & { w: string; dot?: string }) => (
  <div className={"relative flex h-full shrink-0 items-center justify-center pb-3 " + w}>
    {children}
    {dot && <div className={"absolute bottom-[2px] left-1/2 size-2 -translate-x-1/2 rounded-full " + dot} />}
  </div>
);

const apps: { el: React.ReactNode; dot?: string }[] = [
  { el: <Finder />, dot: "bg-[#9ea5ad]" }, { el: <Launchpad /> }, { el: <Safari /> }, { el: <ChromeArt />, dot: "bg-[#9fa8b8]" },
  { el: <Messages /> }, { el: <Mail /> }, { el: <Photos /> }, { el: <FaceTime /> }, { el: <Calendar /> }, { el: <Contacts /> },
  { el: <Notes /> }, { el: <Freeform /> }, { el: <AppleTV /> }, { el: <Reminders /> }, { el: <Numbers /> }, { el: <Music /> },
  { el: <Podcasts /> }, { el: <Keynote /> }, { el: <Pages /> }, { el: <AppStore /> }, { el: <Settings /> },
];

function Dock() {
  return (
    <nav className="relative mt-2 ml-[82px] flex h-[122px] w-[2716px] shrink-0 rounded-[34px] border-2 border-white/20 bg-[linear-gradient(90deg,#1b1f27_0px,#1b2028_200px,transparent_700px),linear-gradient(180deg,transparent_20%,rgba(70,20,30,0.45)_100%),linear-gradient(90deg,#1b1f27_0px,#1d2a30_180px,#20304a_420px,#2f304d_620px,#393350_900px,#35324c_1100px,#38334f_1400px,#3a3352_1800px,#38304d_2050px,#50202c_2250px,#5e2322_2420px,#662316_2716px)] pt-px pl-1 shadow-[0_-14px_60px_rgba(0,0,0,0.24)]">
      {apps.map((a, i) => (
        <Slot key={i} w="w-[100.5px]" dot={a.dot}>{a.el}</Slot>
      ))}
      <Slot w="w-[49px]"><div className="mt-[12px] h-[90px] w-0.5 bg-[#8a6a76]" /></Slot>
      <Slot w="w-[94px]" dot="bg-[#d6a0b4]"><PythonDoc /></Slot>
      <Slot w="w-[105px]"><Database /></Slot>
      <Slot w="w-[93px]"><GearApp /></Slot>
      <Slot w="w-[113px]" dot="bg-[#e8a29a]"><VSCode /></Slot>
      <Slot w="w-[33px]"><div className="mt-[12px] h-[90px] w-0.5 bg-[#a06a62]" /></Slot>
      <Slot w="w-[112px]"><Trash /></Slot>
    </nav>
  );
}

/* ---------- desktop ---------- */

const Wallpaper = () => (
  <svg viewBox="0 0 2880 1800" className="absolute inset-0 h-[1800px] w-[2880px]">
    <defs>
      <linearGradient id="wr" x1="0" y1="0" x2="0" y2="1"><stop stopColor="#0b1c36" /><stop offset=".03" stopColor="#1c1c38" /><stop offset=".07" stopColor="#8f4433" /><stop offset=".12" stopColor="#ad4d2e" /><stop offset=".35" stopColor="#8d3a24" /><stop offset=".6" stopColor="#6b2014" /><stop offset="1" stopColor="#6b2014" /></linearGradient>
      <linearGradient id="wo" x1="0" y1="0" x2="0" y2="1"><stop stopColor="#a3501f" /><stop offset=".35" stopColor="#8a3019" /><stop offset=".75" stopColor="#45190e" /><stop offset="1" stopColor="#852a15" /></linearGradient>
      <linearGradient id="wb"><stop stopColor="#051a2a" /><stop offset="1" stopColor="#020a12" /></linearGradient>
      <linearGradient id="wm"><stop stopColor="#28061a" /><stop offset="1" stopColor="#481538" /></linearGradient>
      <linearGradient id="wp"><stop stopColor="#4c0b26" /><stop offset=".35" stopColor="#2b0518" /><stop offset="1" stopColor="#52193f" /></linearGradient>
      <linearGradient id="wq"><stop stopColor="#2e0822" /><stop offset=".3" stopColor="#450c2b" /><stop offset=".6" stopColor="#57201a" /><stop offset="1" stopColor="#7d2a16" /></linearGradient>
      <linearGradient id="wt"><stop stopColor="#2c0810" /><stop offset="1" stopColor="#451a0e" /></linearGradient>
    </defs>
    <rect width="2880" height="1800" fill="#03101c" />
    <rect y="40" width="636" height="60" fill="#06182c" />
    <rect x="636" y="44" width="780" height="12" fill="#c87a34" />
    <rect x="1416" y="44" width="700" height="12" fill="#a83e20" />
    <rect x="2116" y="44" width="764" height="12" fill="#101c3a" />
    <rect x="2790" y="48" width="90" height="1100" fill="url(#wr)" />
    <path d="M2780 1126l100-42v716h-100z" fill="url(#wo)" />
    <path d="M2856 1100l24-16" stroke="#c06a20" strokeWidth="3" />
    <rect y="1600" width="228" height="200" fill="url(#wb)" />
    <rect x="228" y="1640" width="82" height="80" fill="#1c3427" />
    <rect x="310" y="1640" width="1966" height="80" fill="#16304c" />
    <rect x="2276" y="1640" width="510" height="80" fill="url(#wt)" />
    <rect y="1720" x="100" width="500" height="80" fill="#03101a" />
    <path d="M560 1740l40 60h380l-15-60z" fill="url(#wm)" />
    <path d="M965 1740l15 60h285l-15-60z" fill="#49191a" />
    <path d="M1250 1740l15 60h770l-15-60z" fill="url(#wp)" />
    <path d="M2020 1740l15 60h780v-60z" fill="url(#wq)" />
  </svg>
);

export default function App() {
  return (
    <div className="relative h-[1800px] w-[2880px] overflow-hidden bg-[#03101c]">
      <Wallpaper />
      <div className="relative flex h-full flex-col">
        <MenuBar />
        <section className="mt-0.5 flex h-[1610px] w-[2860px] shrink-0 flex-col overflow-hidden rounded-[22px] shadow-[0_0_0_1px_#000,0_10px_40px_rgba(0,0,0,0.3)]">
          <div className="relative flex h-[242px] shrink-0 flex-col bg-[#2c1b10]">
            <TabStrip />
            <div className="flex flex-1 flex-col rounded-t-2xl border-b-2 border-[#5a463c] bg-[#4a3529]">
              <Toolbar />
              <BookmarkBar />
            </div>
            <div className="pointer-events-none absolute inset-0 rounded-t-[22px] border-x-2 border-t-2 border-white/30" />
          </div>
          <Page />
        </section>
        <Dock />
      </div>
    </div>
  );
}
